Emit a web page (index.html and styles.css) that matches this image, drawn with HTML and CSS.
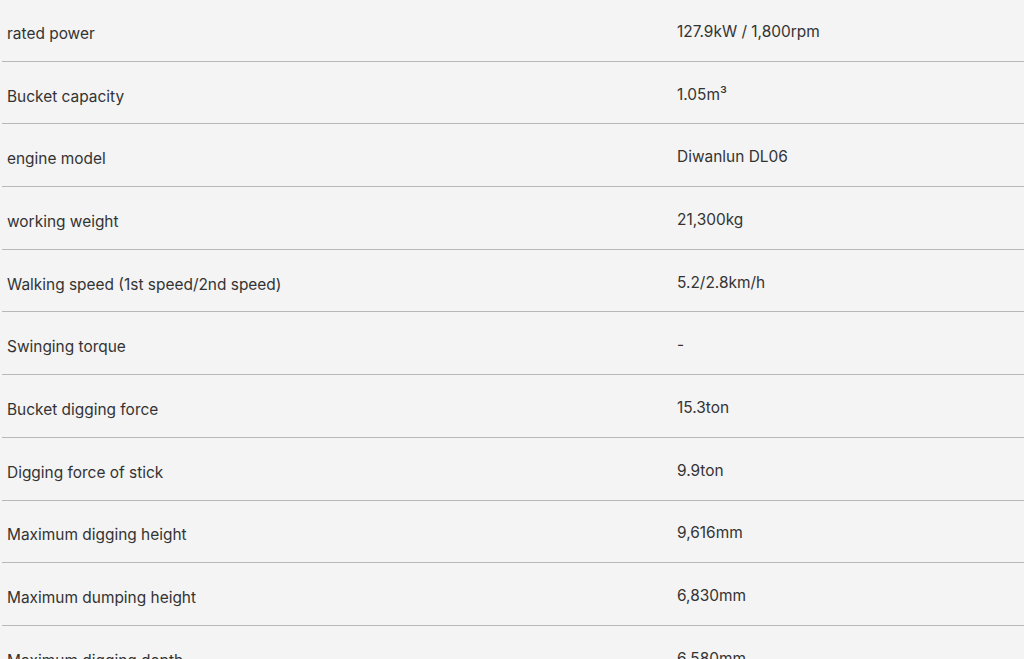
FILE: index.html
```html
<!DOCTYPE html>
<html lang="en">
<head>
<meta charset="utf-8">
<title>Specifications</title>
<link rel="stylesheet" href="styles.css">
</head>
<body>
<div class="specs">
  <div class="row"><div class="name">rated power</div><div class="value">127.9kW / 1,800rpm</div></div>
  <div class="row"><div class="name">Bucket capacity</div><div class="value">1.05m³</div></div>
  <div class="row"><div class="name">engine model</div><div class="value">Diwanlun DL06</div></div>
  <div class="row"><div class="name">working weight</div><div class="value">21,300kg</div></div>
  <div class="row"><div class="name">Walking speed (1st speed/2nd speed)</div><div class="value">5.2/2.8km/h</div></div>
  <div class="row"><div class="name">Swinging torque</div><div class="value">-</div></div>
  <div class="row"><div class="name">Bucket digging force</div><div class="value">15.3ton</div></div>
  <div class="row"><div class="name">Digging force of stick</div><div class="value">9.9ton</div></div>
  <div class="row"><div class="name">Maximum digging height</div><div class="value">9,616mm</div></div>
  <div class="row"><div class="name">Maximum dumping height</div><div class="value">6,830mm</div></div>
  <div class="row"><div class="name">Maximum digging depth</div><div class="value">6,580mm</div></div>
</div>
</body>
</html>
```
FILE: styles.css
```css
html, body {
  margin: 0;
  padding: 0;
  background: #f4f4f4;
}
body {
  font-family: Inter, "Liberation Sans", Arial, sans-serif;
  font-size: 15.45px;
  color: #333333;
  overflow: hidden;
}
.specs {
  margin: -1px 0 0 2px;
}
.row {
  display: grid;
  grid-template-columns: 675px 1fr;
  align-items: center;
  box-sizing: border-box;
  height: 62.7px;
  padding-top: 7px;
  border-bottom: 1px solid #b8b8b8;
}
.name {
  padding-left: 5px;
}
.value {
  padding-bottom: 4px;
}
```
